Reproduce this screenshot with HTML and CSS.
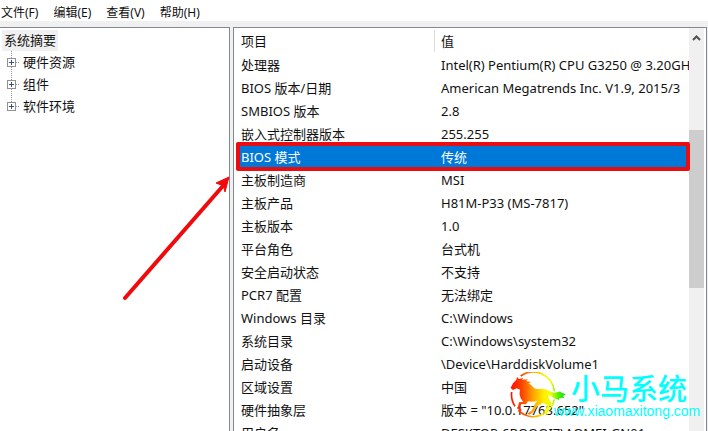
FILE: index.html
```html
<!DOCTYPE html>
<html lang="zh-CN">
<head>
    <meta charset="UTF-8">
    <meta name="viewport" content="width=device-width, initial-scale=1.0">
    <title>系统信息</title>
    <link rel="stylesheet" href="styles.css">
</head>
<body>

<nav class="menubar">
    <button type="button">文件(F)</button>
    <button type="button">编辑(E)</button>
    <button type="button">查看(V)</button>
    <button type="button">帮助(H)</button>
</nav>

<main class="panes">
    <section class="tree">
        <a class="tree-root" href="#">系统摘要</a>
        <ul>
            <li><button type="button" class="expand" aria-label="展开 硬件资源"></button><a href="#">硬件资源</a></li>
            <li><button type="button" class="expand" aria-label="展开 组件"></button><a href="#">组件</a></li>
            <li><button type="button" class="expand" aria-label="展开 软件环境"></button><a href="#">软件环境</a></li>
        </ul>
    </section>

    <section class="details">
        <div class="list">
            <table>
                <thead>
                    <tr><th class="name">项目</th><th>值</th></tr>
                </thead>
                <tbody>
                    <tr><td>处理器</td><td>Intel(R) Pentium(R) CPU G3250 @ 3.20GHz</td></tr>
                    <tr><td>BIOS 版本/日期</td><td>American Megatrends Inc. V1.9, 2015/3</td></tr>
                    <tr><td>SMBIOS 版本</td><td>2.8</td></tr>
                    <tr><td>嵌入式控制器版本</td><td>255.255</td></tr>
                    <tr class="selected"><td>BIOS 模式</td><td>传统</td></tr>
                    <tr><td>主板制造商</td><td>MSI</td></tr>
                    <tr><td>主板产品</td><td>H81M-P33 (MS-7817)</td></tr>
                    <tr><td>主板版本</td><td>1.0</td></tr>
                    <tr><td>平台角色</td><td>台式机</td></tr>
                    <tr><td>安全启动状态</td><td>不支持</td></tr>
                    <tr><td>PCR7 配置</td><td>无法绑定</td></tr>
                    <tr><td>Windows 目录</td><td>C:\Windows</td></tr>
                    <tr><td>系统目录</td><td>C:\Windows\system32</td></tr>
                    <tr><td>启动设备</td><td>\Device\HarddiskVolume1</td></tr>
                    <tr><td>区域设置</td><td>中国</td></tr>
                    <tr><td>硬件抽象层</td><td>版本 = "10.0.17763.652"</td></tr>
                    <tr><td>用户名</td><td>DESKTOP-6BQOQI7\AOMEI-GN01</td></tr>
                </tbody>
            </table>
        </div>
        <div class="scrollbar">
            <button type="button" class="scroll-up" aria-label="向上滚动">
                <svg width="9" height="6" viewBox="0 0 9 6"><path d="M1 5 L4.500 1.500 L8 5" fill="none" stroke="#505050" stroke-width="2"/></svg>
            </button>
            <div class="thumb"></div>
        </div>
        <div class="mark"></div>
    </section>
</main>

<svg class="arrow" width="110" height="126" viewBox="0 0 110 126">
    <path d="M5 122 L102 11" stroke="#f00a0c" stroke-width="4" stroke-linecap="round"/>
    <path d="M109 1 L96 7 L101 9 L104 12 L105 16 Z" fill="#f00a0c" stroke="#f00a0c"/>
</svg>

<div class="watermark">
    <svg width="58" height="46" viewBox="30 36 174 138">
        <defs>
            <linearGradient id="rainbow" gradientUnits="userSpaceOnUse" x1="32" y1="0" x2="198" y2="0">
                <stop offset="0" stop-color="#ff1000"/>
                <stop offset="0.200" stop-color="#ff4000"/>
                <stop offset="0.400" stop-color="#ffa000"/>
                <stop offset="0.600" stop-color="#fff000"/>
                <stop offset="0.720" stop-color="#f0ff00"/>
                <stop offset="0.850" stop-color="#60f000"/>
                <stop offset="1" stop-color="#00e020"/>
            </linearGradient>
        </defs>
        <path d="M62 48 A64 64 0 0 1 163 94 M163 118 A64 64 0 0 1 55 151 M45 139 A64 64 0 0 1 35 96" fill="none" stroke="url(#rainbow)" stroke-width="5"/>
        <path d="M32 84 L39 70 L49 59 L51 51 L57 57 L70 54 L66 59 L84 58 L78 63 L94 66 L86 70 L96 77 Q104 89 119 87 Q137 84 149 94 Q160 101 171 97 Q181 91 185 98 L198 103 L189 108 L193 113 L179 115 L176 120 Q162 116 152 108 L144 105 Q146 119 153 126 Q157 132 149 139 L140 155 L144 165 L136 162 L132 156 L143 137 L129 128 Q121 135 113 137 L100 155 L89 164 L82 161 L96 151 L106 130 L113 122 Q99 127 84 124 L78 133 L64 132 L59 143 L66 151 L60 154 L53 145 L57 127 L70 126 L62 115 Q56 102 60 89 L50 85 L39 90 Z" fill="url(#rainbow)"/>
    </svg>
    <div class="watermark-text">
        <span class="brand">小马系统</span>
        <span class="site">www.xiaomaxitong.com</span>
    </div>
</div>

</body>
</html>
```

FILE: styles.css
```css
* {
    box-sizing: border-box;
}
body {
    margin: 0;
    height: 100vh;
    overflow: hidden;
    position: relative;
    display: flex;
    flex-direction: column;
    background-color: #f0f0f0;
    color: #111;
    font-family: "Noto Sans", "Noto Sans CJK SC", sans-serif;
    font-size: 13px;
}
button {
    border: 0;
    padding: 0;
    background: none;
    color: inherit;
    font: inherit;
}
a {
    color: inherit;
    text-decoration: none;
}
.menubar {
    display: flex;
    gap: 15px;
    height: 21px;
    flex: none;
    padding: 4px 0 0 1px;
    background-color: #fff;
    font-size: 12px;
    line-height: 17px;
}
.panes {
    display: flex;
    gap: 3px;
    flex: 1;
    min-height: 0;
    padding: 6px 1px 0 0;
}
/* left tree */
.tree {
    flex: 0 0 230px;
    padding: 1px 2px;
    border-top: 1px solid #828790;
    border-right: 1px solid #828790;
    background-color: #fff;
    line-height: 22px;
}
.tree-root {
    display: inline-block;
    padding: 0 2px;
    background-color: #f0f0f0;
    line-height: 21px;
}
.tree ul {
    list-style: none;
    margin: 0 0 0 9px;
    padding: 0;
    width: 100px;
    background: repeating-linear-gradient(#999 0 1px, transparent 1px 2px) no-repeat 0 0 / 1px 56px;
}
.tree li {
    display: flex;
    align-items: center;
    margin-left: -4px;
    height: 22px;
}
.tree li a {
    padding-left: 7px;
    background: repeating-linear-gradient(90deg, #999 0 1px, transparent 1px 2px) no-repeat 0 11px / 4px 1px;
}
.expand {
    width: 9px;
    height: 9px;
    border: 1px solid #919191;
    background:
        linear-gradient(#33508c, #33508c) no-repeat center / 5px 1px,
        linear-gradient(#33508c, #33508c) no-repeat center / 1px 5px,
        #fff;
}
/* right list */
.details {
    position: relative;
    display: flex;
    flex: 1;
    min-width: 0;
    padding-right: 2px;
    border: 1px solid #828790;
    border-bottom: 0;
    background-color: #fff;
}
.list {
    flex: 1;
    min-width: 0;
    overflow: hidden;
    padding-left: 5px;
}
table {
    width: 100%;
    table-layout: fixed;
    border-collapse: collapse;
}
th, td {
    height: 23px;
    padding: 0 0 0 2px;
    line-height: 20px;
    font-weight: normal;
    text-align: left;
    white-space: nowrap;
}
th {
    height: 25px;
}
.name {
    width: 200px;
    background: linear-gradient(#ddd, #ddd) no-repeat 195px 2px / 1px 22px;
}
.selected {
    background-color: #0078d7;
    color: #fff;
}
.scrollbar {
    flex: 0 0 15px;
    background-color: #f0f0f0;
}
.scroll-up {
    display: flex;
    align-items: center;
    justify-content: center;
    width: 100%;
    height: 20px;
}
.thumb {
    height: 158px;
    margin-top: 82px;
    background-color: #cdcdcd;
}
/* red frame around the BIOS mode row */
.mark {
    position: absolute;
    top: 114px;
    left: 2px;
    right: 16px;
    height: 29px;
    border: 4px solid #e90c10;
    border-radius: 2px;
}
.arrow {
    position: absolute;
    top: 176px;
    left: 120px;
}
.watermark {
    position: absolute;
    top: 372px;
    left: 510px;
    display: flex;
    color: #00ffff;
}
.watermark-text {
    display: flex;
    flex-direction: column;
    margin-left: -14px;
}
.brand {
    padding-left: 17px;
    font-family: "Noto Sans CJK SC", sans-serif;
    font-size: 29px;
    font-weight: 500;
    line-height: 31px;
}
.site {
    font-family: "Liberation Sans", Arial, sans-serif;
    font-size: 14px;
    line-height: 16px;
}
```
